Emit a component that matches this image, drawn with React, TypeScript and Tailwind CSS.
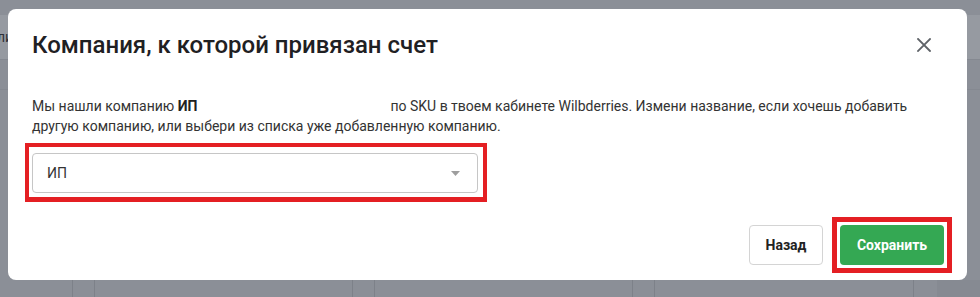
import React from 'react';

function CloseIcon() {
  return (
    <svg width="14" height="14" viewBox="0 0 14 14" fill="none">
      <path d="M1 1L13 13M13 1L1 13" stroke="#5f6368" strokeWidth="1.8" strokeLinecap="square" />
    </svg>
  );
}

function Caret() {
  return (
    <svg width="9" height="5" viewBox="0 0 9 5">
      <path d="M0 0H9L4.5 5Z" fill="#9e9e9e" />
    </svg>
  );
}

export default function App() {
  return (
    <div className="relative w-[980px] h-[297px] overflow-hidden bg-[#8b8f97] font-['Roboto',sans-serif]">
      {/* dimmed page behind the dialog */}
      <div className="flex flex-col h-full">
        <div className="h-[15px]" />
        <div className="h-[45px] bg-[#969aa1] flex items-center border-b border-[#858991]">
          <span className="-ml-[3px] text-[14px] text-[#2f3137]">ли</span>
        </div>
        <div className="h-[30px] border-b border-[#858991]" />
        <div className="mt-auto flex h-[40px] items-end">
          <div className="w-[73px] h-full border-r border-[#7d8189] rounded-tr-md" />
          <div className="ml-[21px] w-[259px] h-full border-x border-t border-[#7d8189] rounded-t-md" />
          <div className="ml-[21px] w-[259px] h-full border-x border-t border-[#7d8189] rounded-t-md" />
          <div className="ml-[21px] w-[260px] h-full border-x border-t border-[#7d8189] rounded-t-md" />
          <div className="ml-auto w-[43px] h-[17px] bg-[#868a92]" />
        </div>
      </div>

      {/* dialog */}
      <div className="absolute left-[8px] top-[9px] w-[959px] h-[271px] rounded-[8px] bg-white flex flex-col pl-6 pr-[23px]">
        <div className="mt-[16px] h-10 flex items-center justify-between">
          <h2 className="text-[24px] font-medium text-[#1f2023]">Компания, к которой привязан счет</h2>
          <button className="w-10 h-10 flex items-center justify-center">
            <CloseIcon />
          </button>
        </div>

        <p className="mt-[31px] text-[14px] leading-[20px] text-[#333333]">
          Мы нашли компанию <b className="font-bold text-[#222]">ИП</b>{' '}
          <span className="inline-block w-[186px]" /> по SKU в твоем кабинете Wilbderries. Измени
          название, если хочешь добавить другую компанию, или выбери из списка уже добавленную компанию.
        </p>

        <div className="mt-[7px] self-start -ml-[7px] border-[#e41f23] border-t-4 border-x-4 border-b-[5px] pt-[6px] pl-[3px] pr-[5px] pb-[4px]">
          <div className="w-[446px] h-10 rounded-[4px] border border-[#c6c6c6] flex items-center justify-between pl-[14px] pr-[17px]">
            <span className="text-[14px] text-[#333333]">ИП</span>
            <Caret />
          </div>
        </div>

        <div className="mt-[23px] flex justify-end items-center">
          <button className="w-[74px] h-10 rounded-[4px] border border-[#d4d4d4] text-[14px] font-bold text-[#222]">
            Назад
          </button>
          <div className="ml-[9px] -mr-[8px] -my-[8px] border-[5px] border-[#e41f23] p-[3px]">
            <button className="w-[104px] h-10 rounded-[4px] bg-[#34a853] text-[14px] font-bold text-white">
              Сохранить
            </button>
          </div>
        </div>
      </div>
    </div>
  );
}
